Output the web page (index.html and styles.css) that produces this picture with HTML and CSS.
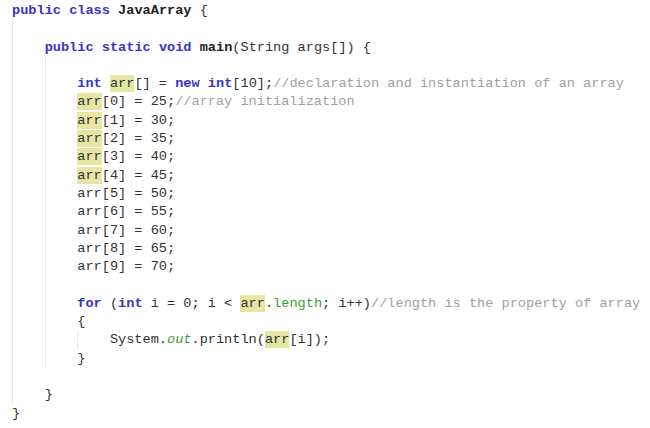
FILE: index.html
```html
<!DOCTYPE html>
<html>
<head>
    <meta charset="UTF-8">
    <meta name="viewport" content="width=device-width, initial-scale=1.0">
    <link rel="stylesheet" href="styles.css">
</head>
<body>
    <div class="code">
        <div class="ln"><span class="kw">public</span> <span class="kw">class</span> <span class="cls">JavaArray</span> {</div>
        <div class="block">
            <div class="ln"> </div>
            <div class="ln"><span class="kw">public</span> <span class="kw">static</span> <span class="kw">void</span> <span class="fn">main</span>(String args[]) {</div>
            <div class="block">
                <div class="ln"> </div>
                <div class="ln"><span class="kw">int</span> <span class="hl">arr</span>[] = <span class="kw">new</span> <span class="kw">int</span>[10];<span class="cm">//declaration and instantiation of an array</span></div>
                <div class="ln"><span class="hl">arr</span>[0] = 25;<span class="cm">//array initialization</span></div>
                <div class="ln"><span class="hl">arr</span>[1] = 30;</div>
                <div class="ln"><span class="hl">arr</span>[2] = 35;</div>
                <div class="ln"><span class="hl">arr</span>[3] = 40;</div>
                <div class="ln"><span class="hl">arr</span>[4] = 45;</div>
                <div class="ln">arr[5] = 50;</div>
                <div class="ln">arr[6] = 55;</div>
                <div class="ln">arr[7] = 60;</div>
                <div class="ln">arr[8] = 65;</div>
                <div class="ln">arr[9] = 70;</div>
                <div class="ln"> </div>
                <div class="ln"><span class="kw">for</span> (<span class="kw">int</span> i = 0; i &lt; <span class="hl">arr</span>.<span class="fld">length</span>; i++)<span class="cm">//length is the property of array</span></div>
                <div class="ln">{</div>
                <div class="block">
                    <div class="ln">System.<span class="fld sta">out</span>.println(<span class="hl">arr</span>[i]);</div>
                </div>
                <div class="ln">}</div>
            </div>
            <div class="ln"> </div>
            <div class="ln">}</div>
        </div>
        <div class="ln">}</div>
    </div>
</body>
</html>
```
FILE: styles.css
```css
body {
    margin: 0;
    background: #ffffff;
}

.code {
    padding: 2px 0 0 12px;
    font-family: "Liberation Mono", "Courier New", monospace;
    font-size: 13.6px;
    line-height: 18.3px;
    color: #333333;
}

.ln {
    white-space: pre;
    height: 18.3px;
}

/* indentation guides */
.block {
    border-left: 1px solid #e8e8e8;
    padding-left: calc(4ch - 1px);
}

.kw {
    color: #3535c8;
    font-weight: bold;
}

.cls,
.fn {
    color: #222222;
    font-weight: bold;
}

.cm {
    color: #a0a0a0;
}

.fld {
    color: #3f9b3f;
}

.sta {
    font-style: italic;
}

.hl {
    background: #e6e6a4;
    padding: 1px 0;
}
```
